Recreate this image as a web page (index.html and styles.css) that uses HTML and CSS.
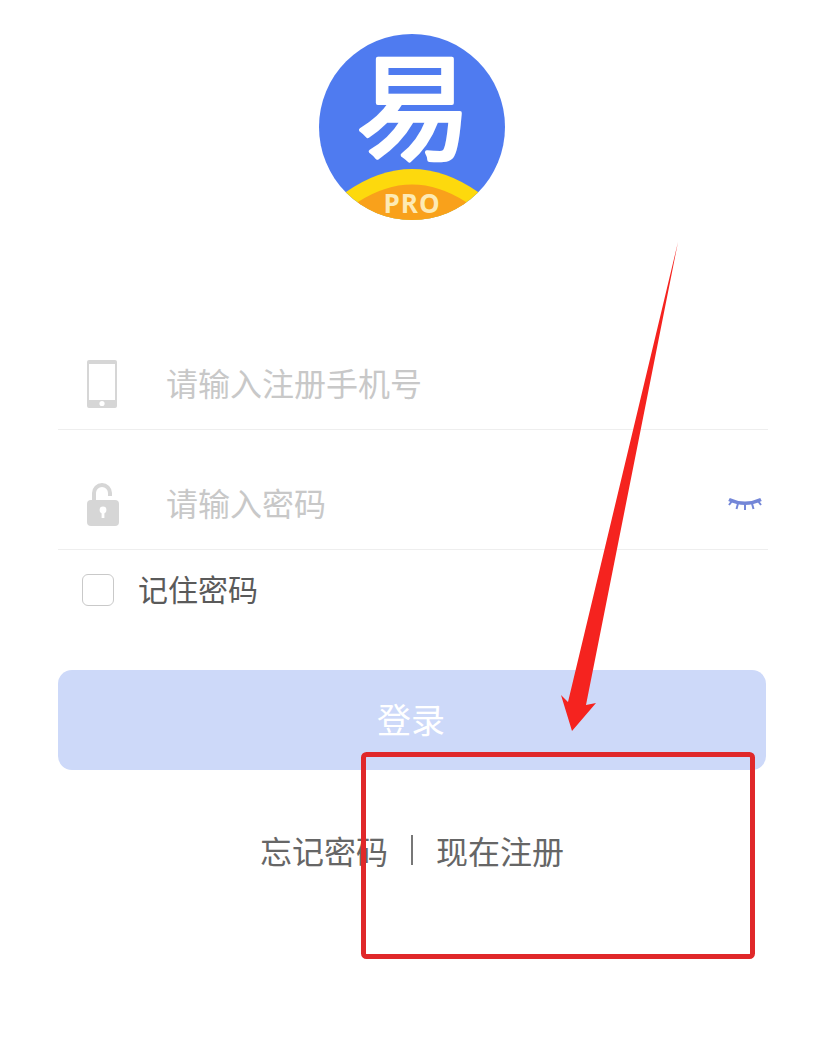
FILE: index.html
```html
<!DOCTYPE html>
<html lang="zh-CN">
<head>
    <meta charset="UTF-8">
    <meta name="viewport" content="width=device-width, initial-scale=1.0">
    <title>登录</title>
    <link rel="stylesheet" href="styles.css">
</head>
<body>

<div class="login-page">
    <svg class="logo" width="186" height="186" viewBox="0 0 186 186">
        <defs>
            <clipPath id="logoClip"><circle cx="93" cy="93" r="93"/></clipPath>
        </defs>
        <g clip-path="url(#logoClip)">
            <rect width="186" height="186" fill="#4f7bf0"/>
            <path d="M0 186 L27 158 Q93 112 159 158 L186 186 Z" fill="#fdd90d"/>
            <path d="M20 186 L39 168 Q93 133 147 168 L166 186 Z" fill="#f9a11b"/>
        </g>
        <text class="logo-char" x="95" y="116" text-anchor="middle">易</text>
        <text class="logo-pro" x="93" y="179" text-anchor="middle">PRO</text>
    </svg>

    <div class="form">
        <div class="field">
            <span class="field-icon">
                <svg width="30" height="48" viewBox="0 0 30 48">
                    <path fill-rule="evenodd" fill="#d6d6d6" d="M2 0h26a2 2 0 0 1 2 2v44a2 2 0 0 1-2 2H2a2 2 0 0 1-2-2V2a2 2 0 0 1 2-2zM2 4v36h26V4z"/>
                    <circle cx="15" cy="43.500" r="2.600" fill="#fff"/>
                </svg>
            </span>
            <span class="placeholder">请输入注册手机号</span>
        </div>
        <div class="field">
            <span class="field-icon">
                <svg width="32" height="43" viewBox="0 0 32 43">
                    <path fill="none" stroke="#d6d6d6" stroke-width="4" d="M7 18V10a8 8 0 0 1 16 0v3"/>
                    <rect x="0" y="17" width="32" height="26" rx="4" fill="#d6d6d6"/>
                    <circle cx="16" cy="27" r="3.400" fill="#fff"/>
                    <rect x="14.600" y="28" width="2.800" height="7" fill="#fff"/>
                </svg>
            </span>
            <span class="placeholder">请输入密码</span>
            <svg class="eye" width="36" height="14" viewBox="0 0 36 14">
                <path fill="none" stroke="#7487d8" stroke-width="3.500" d="M2 2.500Q18 10 34 2.500"/>
                <path fill="none" stroke="#7487d8" stroke-width="2" d="M5 4L2 8M11 6.500L9.500 12M18 7.500V13M25 6.500L26.500 12M31 4L34 8"/>
            </svg>
        </div>
        <label class="remember">
            <span class="checkbox"></span>
            <span class="remember-text">记住密码</span>
        </label>
        <button class="login-btn">登录</button>
        <div class="links">
            <span>忘记密码</span>
            <span class="divider"></span>
            <span>现在注册</span>
        </div>
    </div>

    <!-- red marks drawn over the screenshot -->
    <svg class="marks" width="825" height="1064" viewBox="0 0 825 1064">
        <path fill="#f5231f" d="M678 242 L586 705 L596 703 L572 731 L561 695 L568 702 Z"/>
        <rect x="363.500" y="754.500" width="389" height="202" rx="3" fill="none" stroke="#e0282a" stroke-width="5"/>
    </svg>
</div>

</body>
</html>
```

FILE: styles.css
```css
body {
    margin: 0;
    background-color: #fff;
    font-family: "Noto Sans CJK SC", "Liberation Sans", sans-serif;
}
.login-page {
    position: relative;
    height: 1064px;
    overflow: hidden;
    padding-top: 34px;
    box-sizing: border-box;
}
.logo {
    display: block;
    margin-left: 319px;
    overflow: visible;
}
.logo-char {
    font-size: 115px;
    font-weight: 400;
    fill: #fff;
    stroke: #fff;
    stroke-width: 4px;
    stroke-linejoin: round;
}
.logo-pro {
    font-family: "Open Sans", sans-serif;
    font-size: 26px;
    font-weight: 700;
    letter-spacing: 1px;
    fill: #fdeab4;
}
.form {
    width: 710px;
    margin: 90px 0 0 58px;
}
.field {
    height: 120px;
    box-sizing: border-box;
    border-bottom: 1px solid #eee;
    padding-bottom: 21px;
    display: flex;
    align-items: flex-end;
}
.field-icon {
    width: 108px;
    padding-left: 29px;
    box-sizing: border-box;
    display: flex;
    align-items: center;
    height: 48px;
}
.placeholder {
    margin-bottom: 2px;
    font-size: 32px;
    line-height: 48px;
    color: #c8c8c8;
}
.eye {
    margin-left: auto;
    margin-right: 5px;
    margin-bottom: 17px;
}
.remember {
    display: flex;
    align-items: center;
    gap: 24px;
    height: 80px;
    padding-left: 24px;
    font-size: 30px;
    color: #5a5a5a;
}
.remember-text {
    margin-bottom: 4px;
}
.checkbox {
    width: 32px;
    height: 32px;
    box-sizing: border-box;
    border: 1px solid #c9c9c9;
    border-radius: 6px;
}
.login-btn {
    display: block;
    width: 708px;
    height: 100px;
    margin-top: 40px;
    padding: 0 2px 4px 0;
    border: none;
    border-radius: 14px;
    background-color: #cdd9f9;
    color: #fff;
    font-family: inherit;
    font-size: 34px;
}
.links {
    display: flex;
    align-items: center;
    justify-content: center;
    gap: 23px;
    margin-top: 55px;
    width: 708px;
    height: 50px;
    font-size: 32px;
    color: #666;
}
.divider {
    width: 2px;
    height: 30px;
    background-color: #777;
}
.marks {
    position: absolute;
    left: 0;
    top: 0;
}
```
